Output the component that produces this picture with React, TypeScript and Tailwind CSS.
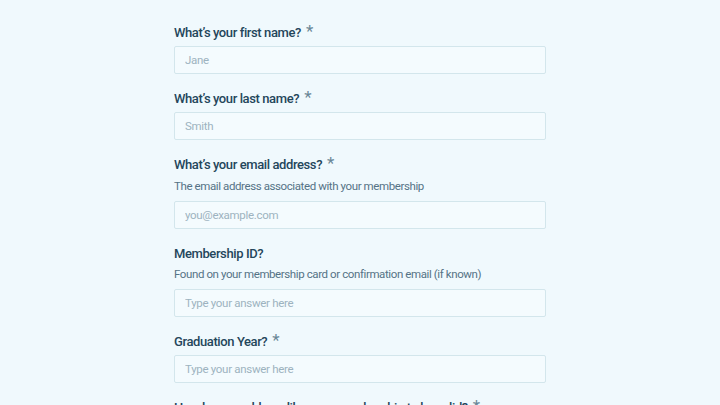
import React from "react";

type Field = {
    label: string;
    required?: boolean;
    hint?: string;
    placeholder?: string;
};

const fields: Field[] = [
    {label: "What’s your first name?", required: true, placeholder: "Jane"},
    {label: "What’s your last name?", required: true, placeholder: "Smith"},
    {
        label: "What’s your email address?",
        required: true,
        hint: "The email address associated with your membership",
        placeholder: "you@example.com",
    },
    {
        label: "Membership ID?",
        hint: "Found on your membership card or confirmation email (if known)",
        placeholder: "Type your answer here",
    },
    {label: "Graduation Year?", required: true, placeholder: "Type your answer here"},
    {label: "How long would you like your membership to be valid?", required: true},
];

const FormField = ({field}: { field: Field }) => (
    <div className="flex flex-col">
        <label className="flex items-start text-[13px] leading-[18px] font-medium tracking-[-0.4px] text-[#24465b]">
            {field.label}
            {field.required && (
                <span className="ml-[5px] -mt-[1px] text-[17px] leading-[17px] font-normal tracking-normal text-[#6a8797]">*</span>
            )}
        </label>
        {field.hint && (
            <p className="mt-[1.5px] text-[11.5px] leading-[20px] tracking-[-0.4px] text-[#557386]">{field.hint}</p>
        )}
        {field.placeholder && (
            <input
                placeholder={field.placeholder}
                className={`${field.hint ? "mt-[5px]" : "mt-[4px]"} h-[28px] w-full rounded-[2px] border border-[#d3e6ec] bg-[#f4fbfe] px-[10px] text-[11.5px] tracking-[-0.3px] text-[#24465b] placeholder:text-[#9db3c0] outline-none`}
            />
        )}
    </div>
);

export default function App() {
    return (
        <div
            className="h-screen w-full bg-[#f0f9fd] overflow-hidden"
            style={{fontFamily: "Roboto, 'Liberation Sans', sans-serif"}}
        >
            <div className="mx-auto flex w-[372px] flex-col gap-[16px] pt-[24px]">
                {fields.map((f) => (
                    <FormField key={f.label} field={f}/>
                ))}
            </div>
        </div>
    );
}
